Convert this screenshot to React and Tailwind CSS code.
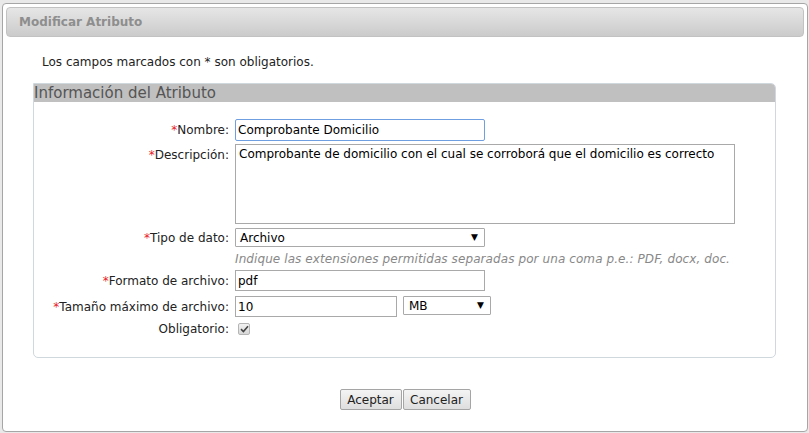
import { useState } from "react";

function Req() {
  return <span className="text-[#e8202a]">*</span>;
}

function Arrow() {
  return <span className="text-[9px] text-black leading-none">▼</span>;
}

export default function App() {
  const [nombre, setNombre] = useState("Comprobante Domicilio");
  const [descripcion, setDescripcion] = useState(
    "Comprobante de domicilio con el cual se corroborá que el domicilio es correcto"
  );
  const [formato, setFormato] = useState("pdf");
  const [tamano, setTamano] = useState("10");

  return (
    <div
      className="w-[809px] h-[433px] bg-[#e9e9e9] overflow-hidden pl-[2px] pt-[3px] text-[12px] text-[#333]"
      style={{ fontFamily: '"DejaVu Sans", Verdana, sans-serif' }}
    >
      <div className="w-[806px] h-[429px] bg-white border border-[#a6a6a6] rounded-[4px] p-[3px] flex flex-col">
        {/* Barra de titulo */}
        <div className="h-[30px] shrink-0 flex items-center pl-[12px] border border-[#c2c2c2] rounded-[4px] bg-gradient-to-b from-[#e6e6e6] to-[#cbcbcb]">
          <span className="font-bold text-[12px] text-[#8e8e8e]">Modificar Atributo</span>
        </div>

        {/* Contenido */}
        <div className="pl-[27px] pr-[28px]">
          <p className="mt-[18px] ml-[9px] leading-[14px] text-[#222]">
            Los campos marcados con * son obligatorios.
          </p>

          <div className="mt-[14px] border border-[#cfd8dc] rounded-[5px] rounded-tl-none h-[275px]">
            <div className="h-[18px] bg-[#c0c0c0] rounded-tr-[4px] flex items-center">
              <span className="text-[15px] leading-none text-[#555]">Información del Atributo</span>
            </div>

            <div className="pt-[17px]">
              {/* Nombre */}
              <div className="flex items-center h-[22px]">
                <label className="w-[196px] text-right pr-[1px] text-[#222]">
                  <Req />Nombre:
                </label>
                <input
                  value={nombre}
                  onChange={(e) => setNombre(e.target.value)}
                  className="ml-[5px] w-[250px] h-[22px] px-[2px] border border-[#6f9fe0] rounded-[2px] outline-none text-[12px] text-black"
                />
              </div>

              {/* Descripcion */}
              <div className="flex items-start mt-[3px] h-[80px]">
                <label className="w-[196px] text-right pr-[1px] pt-[2px] text-[#222]">
                  <Req />Descripción:
                </label>
                <textarea
                  value={descripcion}
                  onChange={(e) => setDescripcion(e.target.value)}
                  className="ml-[5px] w-[500px] h-[80px] px-[3px] py-[2px] border border-[#a9a9a9] outline-none resize-none text-[12px] text-black leading-[15px]"
                />
              </div>

              {/* Tipo de dato */}
              <div className="flex items-center mt-[4px] h-[19px]">
                <label className="w-[196px] text-right pr-[1px] text-[#222]">
                  <Req />Tipo de dato:
                </label>
                <div className="ml-[5px] w-[250px] h-[19px] border border-[#a9a9a9] rounded-[1px] bg-white flex items-center justify-between pl-[4px] pr-[6px] text-black">
                  <span>Archivo</span>
                  <Arrow />
                </div>
              </div>

              {/* Ayuda */}
              <div className="flex items-center h-[23px]">
                <div className="w-[196px]" />
                <span className="ml-[5px] italic text-[#888] tracking-[0.09px]">
                  Indique las extensiones permitidas separadas por una coma p.e.: PDF, docx, doc.
                </span>
              </div>

              {/* Formato */}
              <div className="flex items-center h-[21px]">
                <label className="w-[196px] text-right pr-[1px] text-[#222]">
                  <Req />Formato de archivo:
                </label>
                <input
                  value={formato}
                  onChange={(e) => setFormato(e.target.value)}
                  className="ml-[5px] w-[250px] h-[21px] px-[2px] border border-[#a9a9a9] outline-none text-[12px] text-black"
                />
              </div>

              {/* Tamano */}
              <div className="flex items-center mt-[5px] h-[21px]">
                <label className="w-[196px] text-right pr-[1px] text-[#222]">
                  <Req />Tamaño máximo de archivo:
                </label>
                <input
                  value={tamano}
                  onChange={(e) => setTamano(e.target.value)}
                  className="ml-[5px] w-[162px] h-[21px] px-[2px] border border-[#a9a9a9] outline-none text-[12px] text-black"
                />
                <div className="ml-[6px] w-[88px] h-[19px] self-start border border-[#a9a9a9] rounded-[1px] bg-white flex items-center justify-between pl-[5px] pr-[6px] text-black">
                  <span>MB</span>
                  <Arrow />
                </div>
              </div>

              {/* Obligatorio */}
              <div className="flex items-center mt-[4px] h-[16px]">
                <label className="w-[196px] text-right pr-[1px] text-[#222]">Obligatorio:</label>
                <div className="ml-[8px] w-[12px] h-[12px] border border-[#b5b5b5] rounded-[2px] bg-gradient-to-b from-[#f2f2f2] to-[#d8d8d8] flex items-center justify-center">
                  <svg width="9" height="8" viewBox="0 0 9 8">
                    <path d="M1 4.2 L3.4 6.5 L8 1.2" fill="none" stroke="#444" strokeWidth="1.6" />
                  </svg>
                </div>
              </div>
            </div>
          </div>
        </div>

        {/* Botones */}
        <div className="mt-[31px] flex justify-center">
          <button className="w-[62px] h-[21px] border border-[#a5a5a5] rounded-[2px] bg-gradient-to-b from-[#f4f4f4] to-[#dedede] text-[12px] text-[#222]">
            Aceptar
          </button>
          <button className="ml-[1px] w-[68px] h-[21px] border border-[#a5a5a5] rounded-[2px] bg-gradient-to-b from-[#f4f4f4] to-[#dedede] text-[12px] text-[#222]">
            Cancelar
          </button>
        </div>
      </div>
    </div>
  );
}
